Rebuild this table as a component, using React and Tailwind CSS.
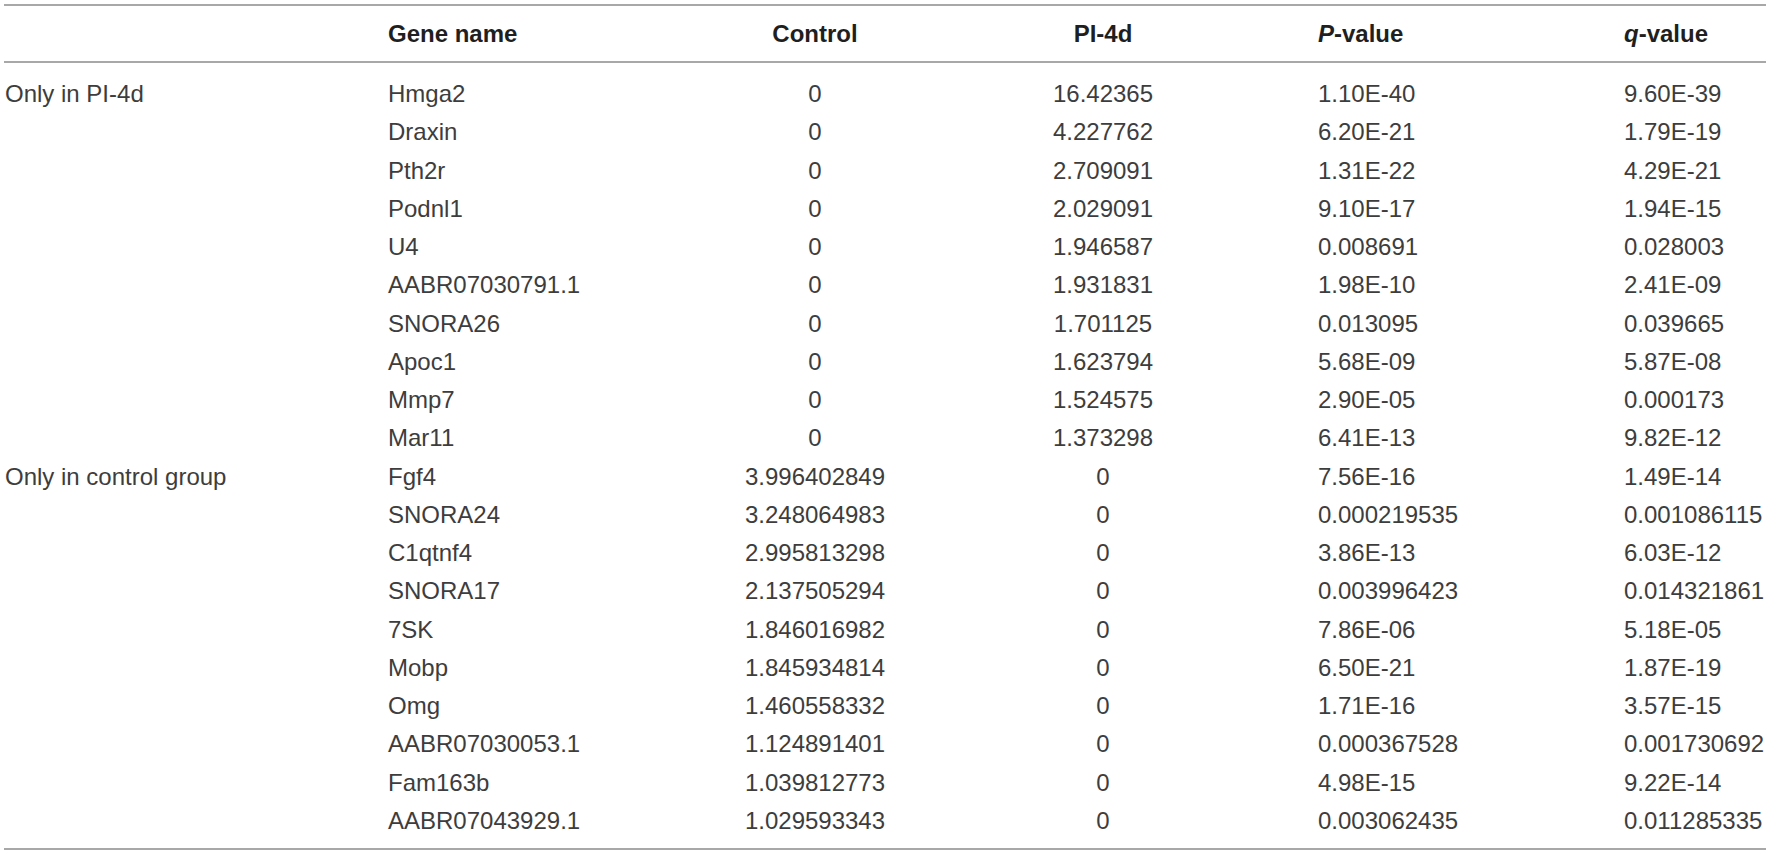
import React from "react";

const groups = [
  {
    label: "Only in PI-4d",
    rows: [
      ["Hmga2", "0", "16.42365", "1.10E-40", "9.60E-39"],
      ["Draxin", "0", "4.227762", "6.20E-21", "1.79E-19"],
      ["Pth2r", "0", "2.709091", "1.31E-22", "4.29E-21"],
      ["Podnl1", "0", "2.029091", "9.10E-17", "1.94E-15"],
      ["U4", "0", "1.946587", "0.008691", "0.028003"],
      ["AABR07030791.1", "0", "1.931831", "1.98E-10", "2.41E-09"],
      ["SNORA26", "0", "1.701125", "0.013095", "0.039665"],
      ["Apoc1", "0", "1.623794", "5.68E-09", "5.87E-08"],
      ["Mmp7", "0", "1.524575", "2.90E-05", "0.000173"],
      ["Mar11", "0", "1.373298", "6.41E-13", "9.82E-12"],
    ],
  },
  {
    label: "Only in control group",
    rows: [
      ["Fgf4", "3.996402849", "0", "7.56E-16", "1.49E-14"],
      ["SNORA24", "3.248064983", "0", "0.000219535", "0.001086115"],
      ["C1qtnf4", "2.995813298", "0", "3.86E-13", "6.03E-12"],
      ["SNORA17", "2.137505294", "0", "0.003996423", "0.014321861"],
      ["7SK", "1.846016982", "0", "7.86E-06", "5.18E-05"],
      ["Mobp", "1.845934814", "0", "6.50E-21", "1.87E-19"],
      ["Omg", "1.460558332", "0", "1.71E-16", "3.57E-15"],
      ["AABR07030053.1", "1.124891401", "0", "0.000367528", "0.001730692"],
      ["Fam163b", "1.039812773", "0", "4.98E-15", "9.22E-14"],
      ["AABR07043929.1", "1.029593343", "0", "0.003062435", "0.011285335"],
    ],
  },
];

const cols = "grid grid-cols-[384px_312px_230px_346px_348px_142px]";

export default function App() {
  return (
    <div className="w-[1772px] h-[854px] bg-white pt-[4px] pl-[4px] font-['Liberation_Sans',Arial,sans-serif] text-[24px] text-[#3d3d3d]">
      <div className="w-[1762px] border-t-2 border-b-2 border-[#a8a8a8]">
        <div className={`${cols} h-[57px] items-center border-b-2 border-[#a8a8a8] font-bold text-[#1f1f1f]`}>
          <div></div>
          <div>Gene name</div>
          <div className="text-center">Control</div>
          <div className="text-center">PI-4d</div>
          <div className="pl-[42px]">
            <i>P</i>-value
          </div>
          <div>
            <i>q</i>-value
          </div>
        </div>
        <div className="pt-[12px] pb-[8px]">
          {groups.map((g) =>
            g.rows.map((r, i) => (
              <div key={g.label + r[0]} className={`${cols} h-[38.25px] items-center`}>
                <div className="pl-[1px]">{i === 0 ? g.label : ""}</div>
                <div>{r[0]}</div>
                <div className="text-center">{r[1]}</div>
                <div className="text-center">{r[2]}</div>
                <div className="pl-[42px]">{r[3]}</div>
                <div>{r[4]}</div>
              </div>
            ))
          )}
        </div>
      </div>
    </div>
  );
}
